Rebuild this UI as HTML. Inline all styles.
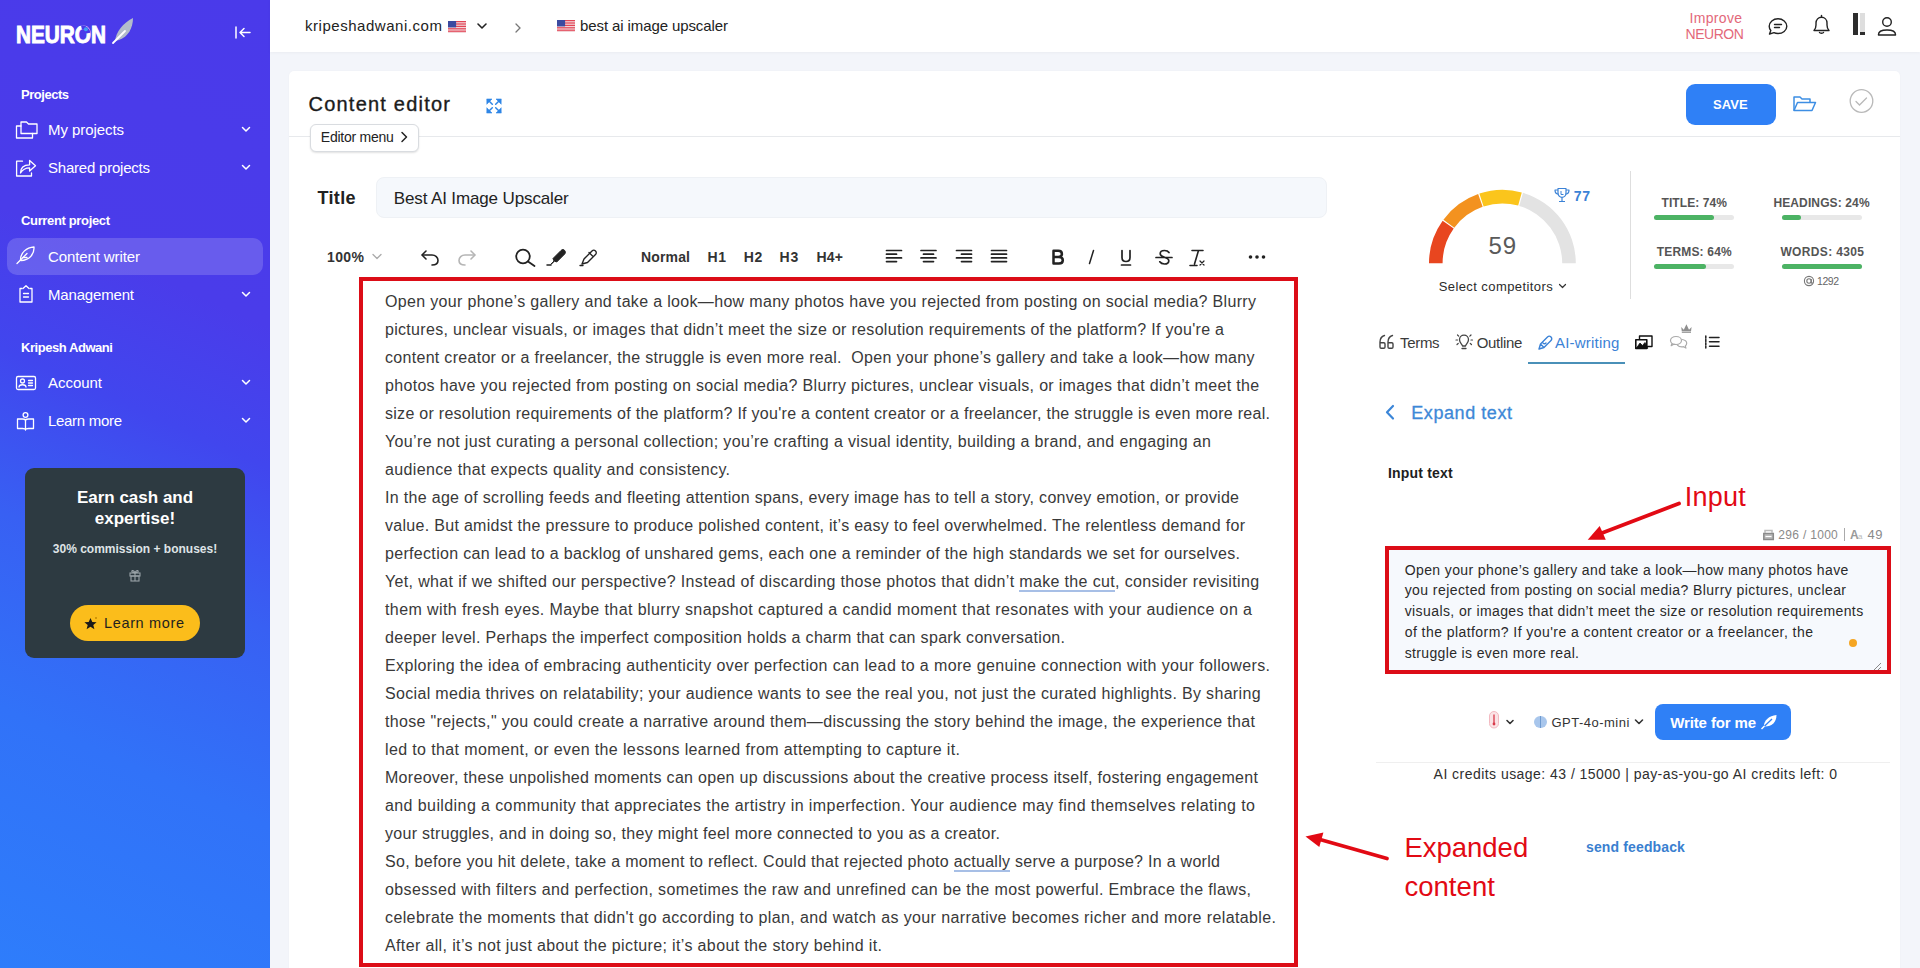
<!DOCTYPE html>
<html><head><meta charset="utf-8"><style>
html,body{margin:0;padding:0;width:1920px;height:968px;overflow:hidden;background:#f3f5fa;}
body{position:relative;font-family:"Liberation Sans", sans-serif;}
.t{position:absolute;white-space:nowrap;line-height:1;}
u.gu{text-decoration:none;border-bottom:2px solid #a7bfe6;padding-bottom:0px}
</style></head><body>
<div style="position:absolute;left:0;top:0;width:270px;height:968px;background:linear-gradient(204deg,#4a3aea 0%,#4a3cea 30%,#4146ee 43%,#3860f3 58%,#3172f8 76%,#2e7dfb 100%);"></div>
<svg style="position:absolute;left:0;top:0" width="270" height="60">
<text x="16" y="42.5" font-family="Liberation Sans" font-weight="700" font-size="23" fill="#fff" stroke="#fff" stroke-width="0.9" textLength="90" lengthAdjust="spacingAndGlyphs">NEURON</text><path d="M81.5 27.6 A5.8 7.1 0 0 1 88.3 33.2" stroke="#4a3aea" stroke-width="4.2" fill="none"/><circle cx="85.9" cy="29.2" r="2" fill="#3d9ef2"/>
<path d="M115 41 C116 32 123 23 133 18 C133 28 128 37 119 40 Z" fill="#b3bccb"/>
<path d="M113 43 L125 31" stroke="#fff" stroke-width="1.8" stroke-linecap="round"/>
<path d="M236 27 v11 M240 32.5 h10 M240 32.5 l4 -4 M240 32.5 l4 4" stroke="#fff" stroke-width="1.5" fill="none" stroke-linecap="round"/>
</svg>
<div class="t " id="sb1" style="letter-spacing:-0.473px;left:21px;top:88.00px;font-size:13px;color:#fff;font-weight:700;">Projects</div>
<div class="t " id="sb2" style="letter-spacing:-0.069px;left:48px;top:122.30px;font-size:15px;color:#fff;font-weight:400;">My projects</div>
<div class="t " id="sb3" style="letter-spacing:-0.219px;left:48px;top:160.30px;font-size:15px;color:#fff;font-weight:400;">Shared projects</div>
<div class="t " id="sb4" style="letter-spacing:-0.350px;left:21px;top:214.00px;font-size:13px;color:#fff;font-weight:700;">Current project</div>
<div style="position:absolute;left:7px;top:238px;width:256px;height:37px;border-radius:10px;background:rgba(255,255,255,0.17)"></div>
<div class="t " id="sb5" style="letter-spacing:-0.106px;left:48px;top:249.10px;font-size:15px;color:#fff;font-weight:400;">Content writer</div>
<div class="t " id="sb6" style="letter-spacing:-0.174px;left:48px;top:286.60px;font-size:15px;color:#fff;font-weight:400;">Management</div>
<div class="t " id="sb7" style="letter-spacing:-0.444px;left:21px;top:341.00px;font-size:13px;color:#fff;font-weight:700;">Kripesh Adwani</div>
<div class="t " id="sb8" style="letter-spacing:-0.034px;left:48px;top:374.70px;font-size:15px;color:#fff;font-weight:400;">Account</div>
<div class="t " id="sb9" style="letter-spacing:-0.302px;left:48px;top:413.30px;font-size:15px;color:#fff;font-weight:400;">Learn more</div>
<svg style="position:absolute;left:0;top:100px" width="270" height="340" fill="none" stroke="#fff" stroke-width="1.3" stroke-linejoin="round" stroke-linecap="round">
<!-- my projects folder -->
<path d="M21 22 h5.5 l2 2 h8.5 v9.5 h-16 z"/><path d="M21 26 h-4.5 v12 h16 v-4.5"/>
<!-- shared -->
<path d="M22.5 61.2 H16.6 V76 H31.5 V73"/><path d="M20.5 73 C20.5 67.5 23.5 64.8 29.6 64.8 V60.5 L35.5 65.8 L29.6 71 V67.8 C25.5 67.8 22.5 69.5 20.5 73 Z"/>
<!-- content writer feather -->
<path d="M20.5 160 C20.5 152.5 26.5 147.5 34 147 C34.5 154.5 29 160.5 21 160.5 Z"/><path d="M17 163.5 L27 153.5"/><path d="M23 157.5 h4"/>
<!-- management clipboard -->
<path d="M22 188.5 h-2 v13.5 h12 v-13.5 h-2"/><path d="M23 188.5 l3-2.8 l3 2.8"/><path d="M23.5 193.5 h2 M26.5 193.5 h2 M23.5 197 h5"/>
<!-- account card -->
<rect x="16.5" y="276.5" width="19" height="13" rx="1.5"/><circle cx="22.5" cy="281" r="2"/><path d="M19 287 c0-3 7-3 7 0"/><path d="M28.5 280.5 h4 M28.5 283 h4 M28.5 285.5 h4"/>
<!-- learn more -->
<circle cx="25.5" cy="315" r="2.4"/><path d="M17.5 319 h5 c2 0 3 .8 3 1.8 c0-1 1-1.8 3-1.8 h5 v9.5 h-5 c-2 0-3 .8-3 1 c0-.2-1-1-3-1 h-5 z"/><path d="M25.5 321 v9"/>
</svg>
<svg style="position:absolute;left:241px;top:125.5px" width="10" height="7" fill="none" stroke="#fff" stroke-width="1.5" stroke-linecap="round" stroke-linejoin="round"><path d="M1.5 1.5 L5 5 L8.5 1.5"/></svg>
<svg style="position:absolute;left:241px;top:163.5px" width="10" height="7" fill="none" stroke="#fff" stroke-width="1.5" stroke-linecap="round" stroke-linejoin="round"><path d="M1.5 1.5 L5 5 L8.5 1.5"/></svg>
<svg style="position:absolute;left:241px;top:290.5px" width="10" height="7" fill="none" stroke="#fff" stroke-width="1.5" stroke-linecap="round" stroke-linejoin="round"><path d="M1.5 1.5 L5 5 L8.5 1.5"/></svg>
<svg style="position:absolute;left:241px;top:378.5px" width="10" height="7" fill="none" stroke="#fff" stroke-width="1.5" stroke-linecap="round" stroke-linejoin="round"><path d="M1.5 1.5 L5 5 L8.5 1.5"/></svg>
<svg style="position:absolute;left:241px;top:416.5px" width="10" height="7" fill="none" stroke="#fff" stroke-width="1.5" stroke-linecap="round" stroke-linejoin="round"><path d="M1.5 1.5 L5 5 L8.5 1.5"/></svg>
<div style="position:absolute;left:25px;top:468px;width:220px;height:190px;border-radius:9px;background:#2d3a41"></div>
<div class="t " style="left:0px;top:489.21px;font-size:17px;color:#fff;font-weight:700;width:270px;text-align:center;">Earn cash and</div>
<div class="t " style="left:0px;top:510.11px;font-size:17px;color:#fff;font-weight:700;width:270px;text-align:center;">expertise!</div>
<div class="t " style="left:0px;top:542.64px;font-size:12px;color:#dfe3e6;font-weight:700;width:270px;text-align:center;">30% commission + bonuses!</div>
<svg style="position:absolute;left:129px;top:569px" width="12" height="13" fill="none" stroke="#9aa3a8" stroke-width="1.1"><rect x="1" y="4" width="10" height="3"/><rect x="2" y="7" width="8" height="5"/><path d="M6 4 v8"/><path d="M6 4 c-1-3-4-3-3-1 z M6 4 c1-3 4-3 3-1z"/></svg>
<div style="position:absolute;left:70px;top:605px;width:130px;height:36px;border-radius:18px;background:#fbbd1b"></div>
<svg style="position:absolute;left:83px;top:615px" width="16" height="16"><path d="M7.5 3 L9.3 7 L13.6 7.3 L10.3 10 L11.4 14.2 L7.5 11.8 L3.6 14.2 L4.7 10 L1.4 7.3 L5.7 7 Z" fill="#1a1a1a"/><circle cx="13" cy="3" r="1" fill="#c58a00"/></svg>
<div class="t " id="lm" style="letter-spacing:0.649px;left:104px;top:615.73px;font-size:14.5px;color:#1f1f1f;font-weight:400;">Learn more</div>
<div style="position:absolute;left:270px;top:0;width:1650px;height:968px;background:#f3f5fa"></div>
<div style="position:absolute;left:270px;top:0;width:1650px;height:52px;background:#fff;box-shadow:0 1px 3px rgba(0,0,0,0.04)"></div>
<div class="t " id="tb1" style="letter-spacing:0.537px;left:305px;top:18.30px;font-size:15px;color:#222;font-weight:400;">kripeshadwani.com</div>
<svg style="position:absolute;left:448px;top:21px" width="18" height="12"><rect width="18" height="12" fill="#f4f4f4" rx="1"/><rect x="0" y="0.00" width="18" height="0.86" fill="#e0283c"/><rect x="0" y="1.71" width="18" height="0.86" fill="#e0283c"/><rect x="0" y="3.43" width="18" height="0.86" fill="#e0283c"/><rect x="0" y="5.14" width="18" height="0.86" fill="#e0283c"/><rect x="0" y="6.86" width="18" height="0.86" fill="#e0283c"/><rect x="0" y="8.57" width="18" height="0.86" fill="#e0283c"/><rect x="0" y="10.29" width="18" height="0.86" fill="#e0283c"/><rect width="8.1" height="6.4" fill="#3b4aa0"/></svg>
<svg style="position:absolute;left:476px;top:21px" width="12" height="10" fill="none" stroke="#222" stroke-width="1.6" stroke-linecap="round" stroke-linejoin="round"><path d="M2 3 L6 7 L10 3"/></svg>
<svg style="position:absolute;left:513px;top:22px" width="10" height="12" fill="none" stroke="#777" stroke-width="1.3" stroke-linecap="round"><path d="M3 2 L7 6 L3 10"/></svg>
<svg style="position:absolute;left:557px;top:20px" width="18" height="12"><rect width="18" height="12" fill="#f4f4f4" rx="1"/><rect x="0" y="0.00" width="18" height="0.86" fill="#e0283c"/><rect x="0" y="1.71" width="18" height="0.86" fill="#e0283c"/><rect x="0" y="3.43" width="18" height="0.86" fill="#e0283c"/><rect x="0" y="5.14" width="18" height="0.86" fill="#e0283c"/><rect x="0" y="6.86" width="18" height="0.86" fill="#e0283c"/><rect x="0" y="8.57" width="18" height="0.86" fill="#e0283c"/><rect x="0" y="10.29" width="18" height="0.86" fill="#e0283c"/><rect width="8.1" height="6.4" fill="#3b4aa0"/></svg>
<div class="t " id="tb2" style="letter-spacing:-0.100px;left:580px;top:17.80px;font-size:15px;color:#222;font-weight:400;">best ai image upscaler</div>
<div class="t " id="imp1" style="letter-spacing:0.320px;left:1689.5px;top:10.75px;font-size:14px;color:#e3687a;font-weight:400;">Improve</div>
<div class="t " id="imp2" style="letter-spacing:-0.474px;left:1685.5px;top:26.75px;font-size:14px;color:#e3687a;font-weight:400;">NEURON</div>
<svg style="position:absolute;left:1760px;top:8px" width="150" height="36" fill="none" stroke="#222" stroke-width="1.4" stroke-linecap="round" stroke-linejoin="round">
<path d="M18 25.5 c-1.5 0-3 -0.3 -4 -0.8 l-4.5 1.3 l1.3-3.5 c-1-1.2-1.6-2.6-1.6-4.2 c0-4.2 4-7.5 8.8-7.5 s8.8 3.3 8.8 7.5 s-4 7.2 -8.8 7.2z"/><path d="M14.5 16.5 h7 M14.5 19.5 h5"/>
<path d="M69 22.5 h-15 c1.5-1.5 2-3 2-5.5 v-2 c0-3.3 2.3-5.8 5.5-5.8 s5.5 2.5 5.5 5.8 v2 c0 2.5 .5 4 2 5.5 z" /><path d="M59.5 24.5 c.5 1 3.5 1 4 0"/><path d="M61.5 7.5 v1.5"/>
<path d="M118.5 26.5 c0-3.5 3-4.5 8.5-4.5 s8.5 1 8.5 4.5 v0.5 h-17 z"/><circle cx="127" cy="14" r="4.3"/>
</svg>
<div style="position:absolute;left:1853px;top:13px;width:5px;height:22px;background:#2d2d2d"></div>
<div style="position:absolute;left:1860px;top:13px;width:5px;height:22px;background:#dedede"></div>
<div style="position:absolute;left:1860px;top:32px;width:5px;height:3px;background:#2d2d2d"></div>
<div style="position:absolute;left:289px;top:71px;width:1611px;height:920px;border-radius:5px;background:#fff;box-shadow:0 0 2px rgba(0,0,0,0.04)"></div>
<div style="position:absolute;left:289px;top:136px;width:1611px;height:1px;background:#e7e9ec"></div>
<div class="t " id="ce" style="letter-spacing:1.220px;left:308.5px;top:93.77px;font-size:20px;color:#1b1b1b;font-weight:400;-webkit-text-stroke:0.35px #1b1b1b;">Content editor</div>
<svg style="position:absolute;left:486px;top:98px" width="16" height="16" fill="none" stroke="#2f86e6" stroke-width="1.5" stroke-linecap="round"><path d="M3.5 3.5 L6.3 6.3 M12.5 3.5 L9.7 6.3 M3.5 12.5 L6.3 9.7 M12.5 12.5 L9.7 9.7"/><path d="M1 1 h5 l-5 5z M15 1 h-5 l5 5z M1 15 h5 l-5-5z M15 15 h-5 l5-5z" fill="#2f86e6" stroke-width="0.6"/></svg>
<div style="position:absolute;left:310px;top:124px;width:107px;height:26px;border-radius:6px;border:1px solid #d9dce0;background:#fff;box-shadow:0 1px 2px rgba(0,0,0,0.12)"></div>
<div class="t " id="em" style="letter-spacing:-0.248px;left:320.8px;top:130.45px;font-size:14px;color:#222;font-weight:400;">Editor menu</div>
<svg style="position:absolute;left:399px;top:130px" width="10" height="14" fill="none" stroke="#222" stroke-width="1.5" stroke-linecap="round" stroke-linejoin="round"><path d="M3 2.5 L7.5 7 L3 11.5"/></svg>
<div style="position:absolute;left:1686px;top:84px;width:90px;height:41px;border-radius:9px;background:#2f80f6"></div>
<div class="t " id="save" style="letter-spacing:0.054px;left:1713px;top:98.00px;font-size:13px;color:#fff;font-weight:700;">SAVE</div>
<svg style="position:absolute;left:1792px;top:94px" width="26" height="20" fill="none" stroke="#3d8ee4" stroke-width="1.5" stroke-linejoin="round"><path d="M2 16.5 V3 h6 l2 2 h8 v3"/><path d="M2 16.5 L5.5 8.5 H23.5 L20 16.5 Z"/></svg>
<svg style="position:absolute;left:1848px;top:88px" width="27" height="26" fill="none" stroke="#b9b9b9" stroke-width="1.3"><circle cx="13.5" cy="13" r="11.3"/><path d="M8 13.5 l3.5 3.5 l7-7" stroke-linecap="round"/></svg>
<div class="t " id="ttl" style="letter-spacing:0.328px;left:317.5px;top:188.76px;font-size:18px;color:#222;font-weight:700;">Title</div>
<div style="position:absolute;left:376px;top:177px;width:951px;height:41px;border-radius:8px;background:#f5f8fc;border:1px solid #eef1f5;box-sizing:border-box"></div>
<div class="t " id="bai" style="letter-spacing:-0.126px;left:393.75px;top:189.86px;font-size:17px;color:#222;font-weight:400;">Best AI Image Upscaler</div>
<div class="t " id="z100" style="letter-spacing:0.396px;left:327px;top:250.15px;font-size:14px;color:#333;font-weight:700;">100%</div>
<svg style="position:absolute;left:371px;top:252px" width="12" height="9" fill="none" stroke="#aaa" stroke-width="1.3" stroke-linecap="round" stroke-linejoin="round"><path d="M2 2.5 L6 6.5 L10 2.5"/></svg>
<svg style="position:absolute;left:410px;top:240px" width="880" height="34" fill="none" stroke="#222" stroke-width="1.6" stroke-linecap="round" stroke-linejoin="round">
<path d="M16 11 L12 15 L16 19"/><path d="M12.5 15 H22 c3.5 0 6 2.5 6 5.5 s-2.5 4.5 -6 4.5" />
<g stroke="#b5b5b5"><path d="M61 11 L65 15 L61 19"/><path d="M64.5 15 H55 c-3.5 0-6 2.5-6 5.5 s2.5 4.5 6 4.5"/></g>
<circle cx="113" cy="16.5" r="6.8" stroke-width="1.8"/><path d="M118 21.5 L124.5 26" stroke-width="1.8"/>
<path d="M141 24 l3-3 l-1-2.5 l8-8 c1.2-1.2 2.8-1.2 3.7 0 s1 2.4 0 3.5 l-8 8 l-2.5-1 l-1.5 2z" fill="#222" stroke-width="1"/><path d="M137 25 h4" stroke-width="1.5"/>
<path d="M172 24 l2-5 l8-8 c1-1 2.5-1 3.5 0 s1 2.5 0 3.5 l-8 8 z" stroke-width="1.4"/><path d="M179 12.5 l3.5 3.5" stroke-width="1.3"/><path d="M170 25.5 h3" stroke-width="1.3"/>
</svg>
<div class="t " id="tn" style="letter-spacing:0.153px;left:641px;top:250.15px;font-size:14px;color:#333;font-weight:700;">Normal</div>
<div class="t " id="h1" style="letter-spacing:0.594px;left:707.5px;top:250.15px;font-size:14px;color:#333;font-weight:700;">H1</div>
<div class="t " id="h2" style="letter-spacing:0.594px;left:743.75px;top:250.15px;font-size:14px;color:#333;font-weight:700;">H2</div>
<div class="t " id="h3" style="letter-spacing:0.894px;left:779.6px;top:250.15px;font-size:14px;color:#333;font-weight:700;">H3</div>
<div class="t " id="h4" style="letter-spacing:0.211px;left:816.5px;top:250.15px;font-size:14px;color:#333;font-weight:700;">H4+</div>
<svg style="position:absolute;left:880px;top:244px" width="140" height="24" fill="none" stroke="#222" stroke-width="1.7" stroke-linecap="round"><path d="M6.5 6.5 h15"/><path d="M6.5 10.2 h10"/><path d="M6.5 13.9 h15"/><path d="M6.5 17.6 h10"/><path d="M41.0 6.5 h15"/><path d="M43.5 10.2 h10"/><path d="M41.0 13.9 h15"/><path d="M43.5 17.6 h10"/><path d="M76.5 6.5 h15"/><path d="M81.5 10.2 h10"/><path d="M76.5 13.9 h15"/><path d="M81.5 17.6 h10"/><path d="M111.5 6.5 h15"/><path d="M111.5 10.2 h15"/><path d="M111.5 13.9 h15"/><path d="M111.5 17.6 h15"/></svg>
<svg style="position:absolute;left:1040px;top:244px" width="240" height="26" fill="none" stroke="#222" stroke-width="1.7" stroke-linecap="round" stroke-linejoin="round">
<path d="M13.5 6.8 h4.8 c2.2 0 3.6 1.3 3.6 3.1 s-1.4 3.1-3.6 3.1 h-4.8 z M13.5 13 h5.5 c2.3 0 3.8 1.4 3.8 3.3 s-1.5 3.3-3.8 3.3 h-5.5 z" stroke-width="2.5"/>
<path d="M53.5 6.5 L49.5 19.5" stroke-width="1.5"/>
<path d="M82 6.5 v7 c0 2.5 1.6 4 4 4 s4-1.5 4-4 v-7 M81.5 21 h9" stroke-width="1.7"/>
<path d="M129 8.5 c-1-1.5-2.8-2-4.5-2 c-2.5 0-4.3 1.3-4.3 3.2 c0 4 8.6 3 8.6 7 c0 2-1.8 3.3-4.3 3.3 c-2 0-3.8-.8-4.7-2.2 M116 13.5 h16"/>
<path d="M152 6.5 h11 M158.5 6.5 L154.5 20 M150 21.5 h7" stroke-width="1.6"/><path d="M160 17 l4 4 M164 17 l-4 4" stroke-width="1.2"/>
</svg>
<svg style="position:absolute;left:1246px;top:251px" width="22" height="12" fill="#222"><circle cx="4.5" cy="6" r="1.8"/><circle cx="11" cy="6" r="1.8"/><circle cx="17.5" cy="6" r="1.8"/></svg>
<div style="position:absolute;left:359px;top:277px;width:939px;height:690px;box-sizing:border-box;border:4px solid #dc0d17"></div>
<div class="t " id="L0" style="letter-spacing:0.326px;left:385px;top:293.96px;font-size:16px;color:#393939;font-weight:400;">Open your phone’s gallery and take a look—how many photos have you rejected from posting on social media? Blurry</div>
<div class="t " id="L1" style="letter-spacing:0.304px;left:385px;top:321.96px;font-size:16px;color:#393939;font-weight:400;">pictures, unclear visuals, or images that didn’t meet the size or resolution requirements of the platform? If you're a</div>
<div class="t " id="L2" style="letter-spacing:0.301px;left:385px;top:349.96px;font-size:16px;color:#393939;font-weight:400;">content creator or a freelancer, the struggle is even more real.&nbsp; Open your phone’s gallery and take a look—how many</div>
<div class="t " id="L3" style="letter-spacing:0.315px;left:385px;top:377.96px;font-size:16px;color:#393939;font-weight:400;">photos have you rejected from posting on social media? Blurry pictures, unclear visuals, or images that didn’t meet the</div>
<div class="t " id="L4" style="letter-spacing:0.277px;left:385px;top:405.96px;font-size:16px;color:#393939;font-weight:400;">size or resolution requirements of the platform? If you're a content creator or a freelancer, the struggle is even more real.</div>
<div class="t " id="L5" style="letter-spacing:0.353px;left:385px;top:433.96px;font-size:16px;color:#393939;font-weight:400;">You’re not just curating a personal collection; you’re crafting a visual identity, building a brand, and engaging an</div>
<div class="t " id="L6" style="letter-spacing:0.360px;left:385px;top:461.96px;font-size:16px;color:#393939;font-weight:400;">audience that expects quality and consistency.</div>
<div class="t " id="L7" style="letter-spacing:0.313px;left:385px;top:489.96px;font-size:16px;color:#393939;font-weight:400;">In the age of scrolling feeds and fleeting attention spans, every image has to tell a story, convey emotion, or provide</div>
<div class="t " id="L8" style="letter-spacing:0.299px;left:385px;top:517.96px;font-size:16px;color:#393939;font-weight:400;">value. But amidst the pressure to produce polished content, it’s easy to feel overwhelmed. The relentless demand for</div>
<div class="t " id="L9" style="letter-spacing:0.317px;left:385px;top:545.96px;font-size:16px;color:#393939;font-weight:400;">perfection can lead to a backlog of unshared gems, each one a reminder of the high standards we set for ourselves.</div>
<div class="t " id="L10" style="letter-spacing:0.351px;left:385px;top:573.96px;font-size:16px;color:#393939;font-weight:400;">Yet, what if we shifted our perspective? Instead of discarding those photos that didn’t <u class="gu">make the cut</u>, consider revisiting</div>
<div class="t " id="L11" style="letter-spacing:0.407px;left:385px;top:601.96px;font-size:16px;color:#393939;font-weight:400;">them with fresh eyes. Maybe that blurry snapshot captured a candid moment that resonates with your audience on a</div>
<div class="t " id="L12" style="letter-spacing:0.316px;left:385px;top:629.96px;font-size:16px;color:#393939;font-weight:400;">deeper level. Perhaps the imperfect composition holds a charm that can spark conversation.</div>
<div class="t " id="L13" style="letter-spacing:0.370px;left:385px;top:657.96px;font-size:16px;color:#393939;font-weight:400;">Exploring the idea of embracing authenticity over perfection can lead to a more genuine connection with your followers.</div>
<div class="t " id="L14" style="letter-spacing:0.334px;left:385px;top:685.96px;font-size:16px;color:#393939;font-weight:400;">Social media thrives on relatability; your audience wants to see the real you, not just the curated highlights. By sharing</div>
<div class="t " id="L15" style="letter-spacing:0.336px;left:385px;top:713.96px;font-size:16px;color:#393939;font-weight:400;">those "rejects," you could create a narrative around them—discussing the story behind the image, the experience that</div>
<div class="t " id="L16" style="letter-spacing:0.376px;left:385px;top:741.96px;font-size:16px;color:#393939;font-weight:400;">led to that moment, or even the lessons learned from attempting to capture it.</div>
<div class="t " id="L17" style="letter-spacing:0.295px;left:385px;top:769.96px;font-size:16px;color:#393939;font-weight:400;">Moreover, these unpolished moments can open up discussions about the creative process itself, fostering engagement</div>
<div class="t " id="L18" style="letter-spacing:0.408px;left:385px;top:797.96px;font-size:16px;color:#393939;font-weight:400;">and building a community that appreciates the artistry in imperfection. Your audience may find themselves relating to</div>
<div class="t " id="L19" style="letter-spacing:0.294px;left:385px;top:825.96px;font-size:16px;color:#393939;font-weight:400;">your struggles, and in doing so, they might feel more connected to you as a creator.</div>
<div class="t " id="L20" style="letter-spacing:0.287px;left:385px;top:853.96px;font-size:16px;color:#393939;font-weight:400;">So, before you hit delete, take a moment to reflect. Could that rejected photo <u class="gu">actually</u> serve a purpose? In a world</div>
<div class="t " id="L21" style="letter-spacing:0.376px;left:385px;top:881.96px;font-size:16px;color:#393939;font-weight:400;">obsessed with filters and perfection, sometimes the raw and unrefined can be the most powerful. Embrace the flaws,</div>
<div class="t " id="L22" style="letter-spacing:0.383px;left:385px;top:909.96px;font-size:16px;color:#393939;font-weight:400;">celebrate the moments that didn't go according to plan, and watch as your narrative becomes richer and more relatable.</div>
<div class="t " id="L23" style="letter-spacing:0.366px;left:385px;top:937.96px;font-size:16px;color:#393939;font-weight:400;">After all, it’s not just about the picture; it’s about the story behind it.</div>
<svg style="position:absolute;left:0;top:0" width="1920" height="300"><path d="M1429.00 263.30 A73.4 73.4 0 0 1 1442.64 220.68 L1453.72 228.57 A59.8 59.8 0 0 0 1442.60 263.30 Z" fill="#e8461f"/><path d="M1443.40 219.64 A73.4 73.4 0 0 1 1478.14 194.03 L1482.64 206.86 A59.8 59.8 0 0 0 1454.33 227.73 Z" fill="#f3921f"/><path d="M1479.35 193.61 A73.4 73.4 0 0 1 1521.77 192.50 L1518.18 205.62 A59.8 59.8 0 0 0 1483.62 206.52 Z" fill="#fbc51c"/><path d="M1523.00 192.85 A73.4 73.4 0 0 1 1575.80 263.30 L1562.20 263.30 A59.8 59.8 0 0 0 1519.18 205.90 Z" fill="#e3e3e3"/></svg>
<div class="t " id="g59" style="letter-spacing:0.797px;left:1488.5px;top:234.28px;font-size:24px;color:#5a5a5a;font-weight:400;">59</div>
<svg style="position:absolute;left:1552px;top:186px" width="20" height="18" fill="none" stroke="#3b82d6" stroke-width="1.2" stroke-linejoin="round"><path d="M6 2.5 h8 v4.5 c0 2.5-1.8 4.3-4 4.3 s-4-1.8-4-4.3z"/><path d="M6 4 h-3 c0 3 1.5 4 3.3 4.2 M14 4 h3 c0 3-1.5 4-3.3 4.2"/><path d="M10 11.5 v3.5 M7 15.5 h6"/><path d="M9 5 v3.5 h2.5" stroke-width="1"/></svg>
<div class="t " id="g77" style="letter-spacing:0.722px;left:1573.7px;top:189.35px;font-size:14px;color:#3b82d6;font-weight:700;">77</div>
<div class="t " id="selc" style="letter-spacing:0.415px;left:1438.7px;top:280.00px;font-size:13px;color:#2b2b2b;font-weight:400;">Select competitors</div>
<svg style="position:absolute;left:1557px;top:282px" width="11" height="8" fill="none" stroke="#333" stroke-width="1.2" stroke-linecap="round" stroke-linejoin="round"><path d="M2.5 2.5 L5.5 5.5 L8.5 2.5"/></svg>
<div style="position:absolute;left:1630px;top:171px;width:1px;height:128px;background:#dedede"></div>
<div class="t " id="st1" style="letter-spacing:0.090px;left:1661.5px;top:196.84px;font-size:12px;color:#555;font-weight:700;">TITLE: 74%</div>
<div style="position:absolute;left:1654px;top:215px;width:80px;height:4.5px;border-radius:3px;background:#e8e8e8"></div>
<div style="position:absolute;left:1654px;top:215px;width:60.4px;height:4.5px;border-radius:3px;background:#4cb364"></div>
<div class="t " id="st2" style="letter-spacing:0.126px;left:1773.4px;top:196.84px;font-size:12px;color:#555;font-weight:700;">HEADINGS: 24%</div>
<div style="position:absolute;left:1782px;top:215px;width:80px;height:4.5px;border-radius:3px;background:#e8e8e8"></div>
<div style="position:absolute;left:1782px;top:215px;width:19.2px;height:4.5px;border-radius:3px;background:#4cb364"></div>
<div class="t " id="st3" style="letter-spacing:0.182px;left:1656.7px;top:246.14px;font-size:12px;color:#555;font-weight:700;">TERMS: 64%</div>
<div style="position:absolute;left:1654px;top:264px;width:80px;height:4.5px;border-radius:3px;background:#e8e8e8"></div>
<div style="position:absolute;left:1654px;top:264px;width:52.0px;height:4.5px;border-radius:3px;background:#4cb364"></div>
<div class="t " id="st4" style="letter-spacing:0.357px;left:1780.4px;top:246.14px;font-size:12px;color:#555;font-weight:700;">WORDS: 4305</div>
<div style="position:absolute;left:1782px;top:264px;width:80px;height:4.5px;border-radius:3px;background:#e8e8e8"></div>
<div style="position:absolute;left:1782px;top:264px;width:80.0px;height:4.5px;border-radius:3px;background:#4cb364"></div>
<svg style="position:absolute;left:1803px;top:275px" width="12" height="12" fill="none" stroke="#777" stroke-width="1.1"><circle cx="6" cy="6" r="4.6"/><circle cx="6" cy="6" r="2.2"/><path d="M8.2 4 v3.5 c0 1 1.5 1 1.5 0"/></svg>
<div class="t " id="n1292" style="letter-spacing:-0.453px;left:1817px;top:276.11px;font-size:10.5px;color:#666;font-weight:400;">1292</div>
<svg style="position:absolute;left:1376px;top:330px;overflow:visible" width="360" height="24" fill="none" stroke="#444" stroke-width="1.4" stroke-linejoin="round" stroke-linecap="round">
<path d="M4 12 c0-3.5 1.5-5.5 4.5-6.5 M4 12 v5 c0 .8.4 1.2 1.2 1.2 h2.6 c.8 0 1.2-.4 1.2-1.2 v-3 c0-.8-.4-1.2-1.2-1.2 h-3.8"/><path d="M12 12 c0-3.5 1.5-5.5 4.5-6.5 M12 12 v5 c0 .8.4 1.2 1.2 1.2 h2.6 c.8 0 1.2-.4 1.2-1.2 v-3 c0-.8-.4-1.2-1.2-1.2 h-3.8"/>
<path d="M86 18.5 h4 M86.5 16 c0-1.5-3-3-3-6.3 c0-2.6 2-4.5 4.5-4.5 s4.5 1.9 4.5 4.5 c0 3.3-3 4.8-3 6.3 z" stroke-width="1.3"/><path d="M80 10 h1.5 M95 10 h1.5 M81.5 5 l1.2 1.2 M95 5 l-1.2 1.2 M81 14.5 l1.2-1 M95.5 14.5 l-1.2-1" stroke-width="1.2"/>
<g stroke="#3b82d6"><path d="M163 19 l1.5-5 l7-7 c1-1 2.5-1 3.5 0 s1 2.5 0 3.5 l-7 7 z M164.5 14 l3.5 3.5 M167 13 c1 1 2 1 3 0"/></g>
<g stroke="#111"><rect x="259.8" y="9.8" width="11" height="8.6" stroke-width="1.6"/><path d="M263.5 9 v-3 h12.5 v10.5 h-4.5" stroke-width="1.4"/><path d="M260.5 18 l3.5-5 l2.5 2.5 l2.5-3 l2.5 5.5z" fill="#111" stroke-width="0.8"/><path d="M274.3 8 v1 M274.3 11 v1 M274.3 14 v1" stroke="#fff" stroke-width="0.7"/></g>
<g stroke="#aaa" stroke-width="1.2"><path d="M300 14.5 c-3.2 0-5.5-1.7-5.5-4 s2.3-4 5.5-4 s5.5 1.7 5.5 4 s-2.3 4-5.5 4 c-.8 0-1.5-.1-2.2-.3 l-2.6 1.5 l.7-2.3"/><path d="M306.5 9.5 c2.5.5 4.2 2 4.2 3.8 c0 1-.5 2-1.4 2.6 l.6 2.2 l-2.4-1.4 c-.5.1-1 .2-1.6.2 c-2 0-3.6-.7-4.5-1.8"/></g>
<path d="M305.2 -3 L307.8 -0.3 L310.4 -5.8 L313 -0.3 L315.6 -3 L315 1.5 H305.8 Z" fill="#8f8f8f" stroke="none"/><rect x="305.8" y="2" width="9.2" height="0.9" fill="#999" stroke="none"/>
<g stroke="#222" stroke-width="1.4"><path d="M329.8 6 v12" stroke-width="1.5" stroke-dasharray="2.2 1.2"/><path d="M333.5 7.4 h9.5 M333.5 11.8 h9.5 M333.5 16.2 h9.5" stroke-width="1.5"/></g>
</svg>
<div class="t " id="tab1" style="letter-spacing:-0.311px;left:1400px;top:334.70px;font-size:15px;color:#3a3a3a;font-weight:400;">Terms</div>
<div class="t " id="tab2" style="letter-spacing:-0.322px;left:1476.7px;top:334.70px;font-size:15px;color:#3a3a3a;font-weight:400;">Outline</div>
<div class="t " id="tab3" style="letter-spacing:0.198px;left:1555px;top:334.70px;font-size:15px;color:#3b82d6;font-weight:400;">AI-writing</div>
<div style="position:absolute;left:1528px;top:362px;width:97px;height:2px;background:#4a90b8"></div>
<svg style="position:absolute;left:1383px;top:403px" width="14" height="18" fill="none" stroke="#3b86d8" stroke-width="2.2" stroke-linecap="round" stroke-linejoin="round"><path d="M10 3 L4 9.2 L10 15.5"/></svg>
<div class="t " id="ext" style="letter-spacing:0.564px;left:1411.3px;top:403.76px;font-size:18px;color:#3d88d7;font-weight:400;-webkit-text-stroke:0.3px #3d88d7;">Expand text</div>
<div class="t " id="inp" style="letter-spacing:0.178px;left:1388px;top:466.35px;font-size:14px;color:#1e1e1e;font-weight:700;">Input text</div>
<div class="t " id="ann1" style="letter-spacing:0.284px;left:1684.7px;top:483.74px;font-size:27px;color:#e20a14;font-weight:400;">Input</div>
<svg style="position:absolute;left:1300px;top:480px" width="600" height="430">
<path d="M379 23.5 L302 53" stroke="#e20a14" stroke-width="3.8" stroke-linecap="round"/>
<path d="M287.7 59.8 L299.7 46 L305.8 59.8 Z" fill="#e20a14"/>
<path d="M87 378.5 L20 359.5" stroke="#e20a14" stroke-width="3.8" stroke-linecap="round"/>
<path d="M5.5 356.4 L23.4 352.5 L19.3 367 Z" fill="#e20a14"/>
</svg>
<svg style="position:absolute;left:1762px;top:528px" width="13" height="13" fill="none" stroke="#8a8a8a" stroke-width="1.5"><rect x="1.8" y="5.5" width="9.5" height="6" fill="#bbb"/><path d="M3 5 v-2.5 h7 v2.5" stroke="#bbb"/><path d="M3.5 8.5 h6" stroke="#fff" stroke-width="1"/></svg>
<div class="t " id="cnt" style="letter-spacing:0.309px;left:1778.3px;top:529.14px;font-size:12px;color:#8a8a8a;font-weight:400;">296 / 1000</div>
<div style="position:absolute;left:1844px;top:528px;width:1px;height:13px;background:#aaa"></div>
<div class="t " style="left:1850px;top:529.14px;font-size:12px;color:#999;font-weight:700;">A</div>
<div class="t " style="left:1858px;top:532.53px;font-size:8px;color:#bbb;font-weight:400;">a</div>
<div class="t " id="n49" style="letter-spacing:0.531px;left:1867.5px;top:528.30px;font-size:13px;color:#8a8a8a;font-weight:400;">49</div>
<div style="position:absolute;left:1385px;top:546px;width:506px;height:128px;box-sizing:border-box;border:4px solid #dc0d17;background:#f6f9fd"></div>
<div class="t " id="TA0" style="letter-spacing:0.387px;left:1404.7px;top:562.55px;font-size:14px;color:#2a2a2a;font-weight:400;">Open your phone’s gallery and take a look—how many photos have</div>
<div class="t " id="TA1" style="letter-spacing:0.426px;left:1404.7px;top:583.35px;font-size:14px;color:#2a2a2a;font-weight:400;">you rejected from posting on social media? Blurry pictures, unclear</div>
<div class="t " id="TA2" style="letter-spacing:0.402px;left:1404.7px;top:604.15px;font-size:14px;color:#2a2a2a;font-weight:400;">visuals, or images that didn’t meet the size or resolution requirements</div>
<div class="t " id="TA3" style="letter-spacing:0.440px;left:1404.7px;top:624.95px;font-size:14px;color:#2a2a2a;font-weight:400;">of the platform? If you're a content creator or a freelancer, the</div>
<div class="t " id="TA4" style="letter-spacing:0.359px;left:1404.7px;top:645.75px;font-size:14px;color:#2a2a2a;font-weight:400;">struggle is even more real.</div>
<div style="position:absolute;left:1849px;top:639px;width:8px;height:8px;border-radius:50%;background:#f5a623"></div>
<svg style="position:absolute;left:1873px;top:661px" width="10" height="10" stroke="#888" stroke-width="1"><path d="M1 9 L8 2 M5 9 L8 6"/></svg>
<svg style="position:absolute;left:1486px;top:709px" width="30" height="22" fill="none"><rect x="3.5" y="2.5" width="9" height="16.5" rx="4.5" fill="#fbe3e6" stroke="#f3b9c1" stroke-width="1"/><path d="M8 5.5 v9" stroke="#d83a4a" stroke-width="1.3"/><circle cx="8" cy="15" r="1.4" fill="#d83a4a"/><path d="M21 11.5 L24 14.5 L27 11.5" stroke="#333" stroke-width="1.6" stroke-linecap="round" stroke-linejoin="round"/></svg>
<div style="position:absolute;left:1534px;top:716px;width:12.5px;height:12px;border-radius:50%;background:#a8c6ec"></div><div style="position:absolute;left:1540px;top:716px;width:1px;height:12px;background:#6e9ad0"></div>
<div class="t " id="gpt" style="letter-spacing:0.503px;left:1551.4px;top:715.50px;font-size:13px;color:#333;font-weight:400;">GPT-4o-mini</div>
<svg style="position:absolute;left:1634px;top:718px" width="10" height="8" fill="none" stroke="#333" stroke-width="1.6" stroke-linecap="round" stroke-linejoin="round"><path d="M1.5 2 L5 5.5 L8.5 2"/></svg>
<div style="position:absolute;left:1655px;top:704px;width:136px;height:36px;border-radius:8px;background:#2f80f6"></div>
<div class="t " id="wfm" style="letter-spacing:-0.114px;left:1670.2px;top:714.80px;font-size:15px;color:#fff;font-weight:700;">Write for me</div>
<svg style="position:absolute;left:1760px;top:713px" width="18" height="17"><path d="M4 13 C4 7 9 3 16.5 2 C16.5 9 12 13.5 5 13.5 Z" fill="#fff"/><path d="M1.5 16 L12 6" stroke="#2f80f6" stroke-width="1.3"/><path d="M1.5 16 L4.5 13" stroke="#fff" stroke-width="1.5"/></svg>
<div style="position:absolute;left:1376px;top:762px;width:514px;height:1px;background:#efefef"></div>
<div class="t " id="cred" style="letter-spacing:0.461px;left:1433.6px;top:767.15px;font-size:14px;color:#2e2e2e;font-weight:400;">AI credits usage: 43 / 15000 | pay-as-you-go AI credits left: 0</div>
<div class="t " id="ann2" style="letter-spacing:-0.008px;left:1404.4px;top:833.52px;font-size:27.5px;color:#e20a14;font-weight:400;">Expanded</div>
<div class="t " id="ann3" style="letter-spacing:0.047px;left:1404.4px;top:873.22px;font-size:27.5px;color:#e20a14;font-weight:400;">content</div>
<div class="t " id="sfb" style="letter-spacing:0.136px;left:1586px;top:840.15px;font-size:14px;color:#3a7fd0;font-weight:700;">send feedback</div>
</body></html>
